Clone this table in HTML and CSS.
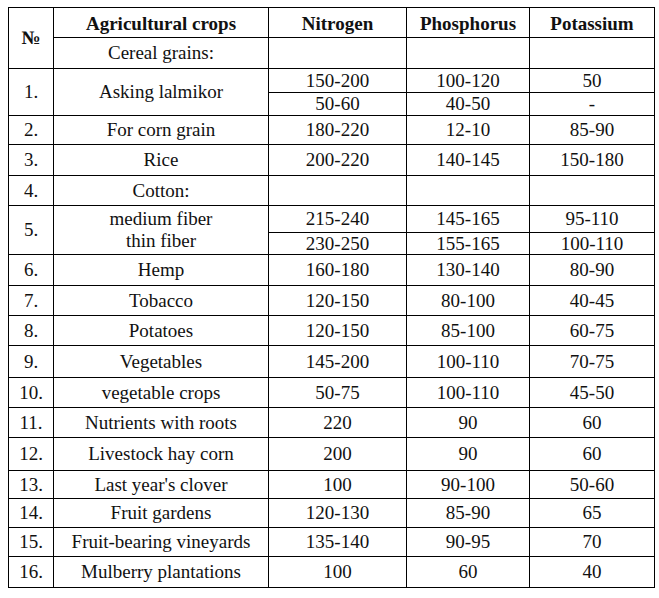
FILE: index.html
```html
<!DOCTYPE html>
<html lang="en">
<head>
<meta charset="utf-8">
<title>Fertilizer norms</title>
<link rel="stylesheet" href="styles.css">
</head>
<body>
<div class="norms">
  <div class="cell th span2 num-head">№</div>
  <div class="cell th">Agricultural crops</div>
  <div class="cell th">Nitrogen</div>
  <div class="cell th">Phosphorus</div>
  <div class="cell th">Potassium</div>

  <div class="cell">Cereal grains:</div>
  <div class="cell"></div><div class="cell"></div><div class="cell"></div>

  <div class="cell span2">1.</div>
  <div class="cell span2">Asking lalmikor</div>
  <div class="cell">150-200</div><div class="cell">100-120</div><div class="cell">50</div>
  <div class="cell">50-60</div><div class="cell">40-50</div><div class="cell">-</div>

  <div class="cell">2.</div><div class="cell">For corn grain</div><div class="cell">180-220</div><div class="cell">12-10</div><div class="cell">85-90</div>
  <div class="cell">3.</div><div class="cell">Rice</div><div class="cell">200-220</div><div class="cell">140-145</div><div class="cell">150-180</div>
  <div class="cell">4.</div><div class="cell">Cotton:</div><div class="cell"></div><div class="cell"></div><div class="cell"></div>

  <div class="cell span2">5.</div>
  <div class="cell span2 two-line">medium fiber<br>thin fiber</div>
  <div class="cell">215-240</div><div class="cell">145-165</div><div class="cell">95-110</div>
  <div class="cell">230-250</div><div class="cell">155-165</div><div class="cell">100-110</div>

  <div class="cell">6.</div><div class="cell">Hemp</div><div class="cell">160-180</div><div class="cell">130-140</div><div class="cell">80-90</div>
  <div class="cell">7.</div><div class="cell">Tobacco</div><div class="cell">120-150</div><div class="cell">80-100</div><div class="cell">40-45</div>
  <div class="cell">8.</div><div class="cell">Potatoes</div><div class="cell">120-150</div><div class="cell">85-100</div><div class="cell">60-75</div>
  <div class="cell">9.</div><div class="cell">Vegetables</div><div class="cell">145-200</div><div class="cell">100-110</div><div class="cell">70-75</div>
  <div class="cell">10.</div><div class="cell">vegetable crops</div><div class="cell">50-75</div><div class="cell">100-110</div><div class="cell">45-50</div>
  <div class="cell">11.</div><div class="cell">Nutrients with roots</div><div class="cell">220</div><div class="cell">90</div><div class="cell">60</div>
  <div class="cell">12.</div><div class="cell">Livestock hay corn</div><div class="cell">200</div><div class="cell">90</div><div class="cell">60</div>
  <div class="cell">13.</div><div class="cell">Last year's clover</div><div class="cell">100</div><div class="cell">90-100</div><div class="cell">50-60</div>
  <div class="cell">14.</div><div class="cell">Fruit gardens</div><div class="cell">120-130</div><div class="cell">85-90</div><div class="cell">65</div>
  <div class="cell">15.</div><div class="cell">Fruit-bearing vineyards</div><div class="cell">135-140</div><div class="cell">90-95</div><div class="cell">70</div>
  <div class="cell">16.</div><div class="cell">Mulberry plantations</div><div class="cell">100</div><div class="cell">60</div><div class="cell">40</div>
</div>
</body>
</html>
```
FILE: styles.css
```css
html {
  margin: 0;
  padding: 0;
  background: #ffffff;
}

body {
  margin: 0;
  padding: 7px 0 0 8px;
  font-family: "Liberation Serif", "Times New Roman", serif;
  font-size: 19px;
  color: #111111;
}

.norms {
  display: grid;
  width: 647px;
  box-sizing: border-box;
  padding: 1px;
  gap: 1px;
  background: #000000;
  grid-template-columns: 44px 214px 137px 122px 124px;
  grid-template-rows: 29px 30px 23px 22px 28px 30px 29px 26px 21px 30px 29px 29px 31px 29px 29px 32px 27px 28px 28px 30px;
}

.cell {
  display: flex;
  align-items: center;
  justify-content: center;
  background: #ffffff;
  text-align: center;
  line-height: 20px;
  white-space: nowrap;
}

.span2 {
  grid-row: span 2;
}

.th {
  font-weight: bold;
  padding-top: 2px;
}

.num-head {
  padding-top: 0;
}

.two-line {
  line-height: 22px;
}
```
